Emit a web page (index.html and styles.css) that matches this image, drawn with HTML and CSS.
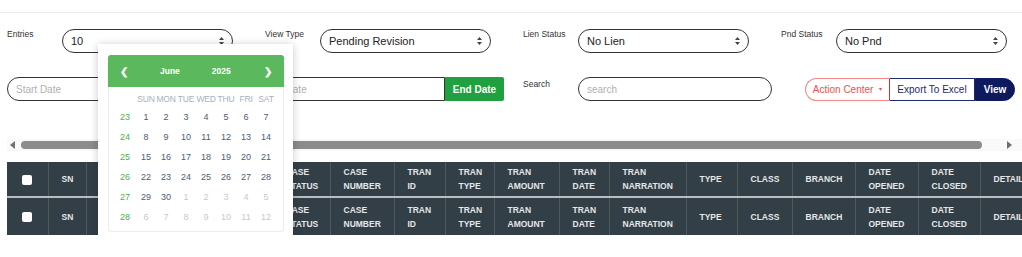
FILE: index.html
```html
<!DOCTYPE html>
<html lang="en">
<head>
  <meta charset="UTF-8" />
  <meta name="viewport" content="width=device-width, initial-scale=1.0"/>
  <title>Lien Report</title>
  <link rel="stylesheet" href="styles.css">
</head>
<body>

  <div class="topbar"></div>

  <div class="panel">
    <div class="filters">
      <div class="field">
        <label for="entries">Entries</label>
        <div class="select-wrap">
          <select id="entries"><option>10</option></select>
          <svg class="arrows" width="5" height="8" viewBox="0 0 5 8"><path d="M2.5 0 L5 3 L0 3 Z M2.5 8 L5 5 L0 5 Z" fill="#444"/></svg>
        </div>
      </div>
      <div class="field">
        <label for="viewType">View Type</label>
        <div class="select-wrap">
          <select id="viewType"><option>Pending Revision</option></select>
          <svg class="arrows" width="5" height="8" viewBox="0 0 5 8"><path d="M2.5 0 L5 3 L0 3 Z M2.5 8 L5 5 L0 5 Z" fill="#444"/></svg>
        </div>
      </div>
      <div class="field">
        <label for="lien">Lien Status</label>
        <div class="select-wrap">
          <select id="lien"><option>No Lien</option></select>
          <svg class="arrows" width="5" height="8" viewBox="0 0 5 8"><path d="M2.5 0 L5 3 L0 3 Z M2.5 8 L5 5 L0 5 Z" fill="#444"/></svg>
        </div>
      </div>
      <div class="field">
        <label for="pnd">Pnd Status</label>
        <div class="select-wrap">
          <select id="pnd"><option>No Pnd</option></select>
          <svg class="arrows" width="5" height="8" viewBox="0 0 5 8"><path d="M2.5 0 L5 3 L0 3 Z M2.5 8 L5 5 L0 5 Z" fill="#444"/></svg>
        </div>
      </div>
    </div>

    <div class="filters-2">
      <div class="date-range">
        <input type="text" class="start-date" placeholder="Start Date">
        <input type="text" class="end-date" placeholder="End Date">
        <button class="btn-end">End Date</button>
      </div>
      <div class="field search-field">
        <label for="search">Search</label>
        <input type="text" id="search" class="search" placeholder="search">
      </div>
      <div class="actions">
        <button class="btn-action">Action Center <span class="caret">&#9662;</span></button>
        <button class="btn-export">Export To Excel</button>
        <button class="btn-view">View</button>
      </div>
    </div>

    <div class="datepicker">
      <div class="dp-inner">
        <div class="dp-head">
          <span class="dp-nav">&#10094;</span>
          <span class="dp-month">June</span>
          <span class="dp-year">2025</span>
          <span class="dp-nav">&#10095;</span>
        </div>
        <div class="dp-grid">
          <span></span><span class="dn">SUN</span><span class="dn">MON</span><span class="dn">TUE</span><span class="dn">WED</span><span class="dn">THU</span><span class="dn">FRI</span><span class="dn">SAT</span>

          <span class="wk">23</span><span>1</span><span>2</span><span>3</span><span>4</span><span>5</span><span>6</span><span>7</span>
          <span class="wk">24</span><span>8</span><span>9</span><span>10</span><span>11</span><span>12</span><span>13</span><span>14</span>
          <span class="wk">25</span><span>15</span><span>16</span><span>17</span><span>18</span><span>19</span><span>20</span><span>21</span>
          <span class="wk">26</span><span>22</span><span>23</span><span>24</span><span>25</span><span>26</span><span>27</span><span>28</span>
          <span class="wk">27</span><span>29</span><span>30</span><span class="off">1</span><span class="off">2</span><span class="off">3</span><span class="off">4</span><span class="off">5</span>
          <span class="wk">28</span><span class="off">6</span><span class="off">7</span><span class="off">8</span><span class="off">9</span><span class="off">10</span><span class="off">11</span><span class="off">12</span>
        </div>
      </div>
    </div>
  </div>

  <div class="scrollbar">
    <span class="sb-left"></span>
    <span class="sb-thumb"></span>
    <span class="sb-right"></span>
  </div>

  <div class="table-wrap">
    <table class="report">
      <colgroup>
        <col class="c-check"><col class="c-sn"><col class="c-accno"><col class="c-accname"><col class="c-status">
        <col class="c-caseno"><col class="c-tid"><col class="c-ttype"><col class="c-tamt"><col class="c-tdate">
        <col class="c-narr"><col class="c-type"><col class="c-class"><col class="c-branch"><col class="c-opened">
        <col class="c-closed"><col class="c-details"><col class="c-action">
      </colgroup>
      <thead>
        <tr>
          <th class="chk"><input type="checkbox"></th>
          <th>SN</th><th>ACCOUNT NUMBER</th><th>ACCOUNT NAME</th><th>CASE STATUS</th>
          <th>CASE NUMBER</th><th>TRAN ID</th><th>TRAN TYPE</th><th>TRAN AMOUNT</th><th>TRAN DATE</th>
          <th>TRAN NARRATION</th><th>TYPE</th><th>CLASS</th><th>BRANCH</th><th>DATE OPENED</th>
          <th>DATE CLOSED</th><th>DETAILS</th><th>ACTION</th>
        </tr>
      </thead>
      <tbody>
        <tr>
          <td class="chk"><input type="checkbox"></td>
          <td>SN</td><td>ACCOUNT NUMBER</td><td>ACCOUNT NAME</td><td>CASE STATUS</td>
          <td>CASE NUMBER</td><td>TRAN ID</td><td>TRAN TYPE</td><td>TRAN AMOUNT</td><td>TRAN DATE</td>
          <td>TRAN NARRATION</td><td>TYPE</td><td>CLASS</td><td>BRANCH</td><td>DATE OPENED</td>
          <td>DATE CLOSED</td><td>DETAILS</td><td>ACTION</td>
        </tr>
      </tbody>
    </table>
  </div>

</body>
</html>
```

FILE: styles.css
```css
* {
  box-sizing: border-box;
}

body {
  margin: 0;
  padding: 0;
  background-color: #ffffff;
  color: #333;
  font-family: "Liberation Sans", Arial, sans-serif;
  overflow: hidden;
}

.topbar {
  height: 13px;
  border-bottom: 1px solid #ececec;
}

.panel {
  position: relative;
  padding: 16px 7px 0;
}

.filters {
  display: grid;
  grid-template-columns: repeat(4, 226px);
  column-gap: 32px;
}

.field {
  display: flex;
  align-items: flex-start;
}

.field label {
  width: 55px;
  flex: none;
  font-size: 8.5px;
  color: #333;
  padding-top: 0;
}

.select-wrap {
  position: relative;
  flex: 1;
}

select {
  -webkit-appearance: none;
  appearance: none;
  width: 100%;
  height: 24px;
  border: 1px solid #333;
  border-radius: 12px;
  padding: 0 8px;
  font-family: inherit;
  font-size: 11px;
  color: #222;
  background: #fff;
}

.arrows {
  position: absolute;
  right: 9px;
  top: 8px;
}

.filters-2 {
  display: flex;
  align-items: flex-start;
  margin-top: 24px;
}

.date-range {
  display: flex;
  width: 497px;
  margin-right: 19px;
}

input[type="text"] {
  height: 24px;
  border: 1px solid #333;
  font-family: inherit;
  font-size: 10px;
  color: #333;
  padding: 0 8px;
  outline: none;
}

input::placeholder {
  color: #b0b0b0;
}

.start-date {
  width: 249px;
  border-radius: 12px;
}

.end-date {
  width: 189px;
  border-radius: 12px 0 0 12px;
}

.btn-end {
  height: 24px;
  width: 59px;
  border: none;
  border-radius: 0 2px 2px 0;
  background-color: #20a03e;
  color: #fff;
  font-family: inherit;
  font-size: 10px;
  font-weight: bold;
  padding: 0;
}

.search-field label {
  padding-top: 2px;
}

.search {
  width: 194px;
  border-radius: 12px;
}

.actions {
  display: flex;
  margin-left: auto;
  margin-top: 1px;
}

.actions button {
  height: 23px;
  font-family: inherit;
  font-size: 10px;
  padding: 0;
  cursor: pointer;
}

.btn-action {
  width: 85px;
  border: 1px solid #f48a8a;
  border-right: 1px solid #c0392b;
  border-radius: 12px 0 0 12px;
  background: #fff;
  color: #ef4f4f;
}

.caret {
  font-size: 6px;
  margin-left: 3px;
  vertical-align: 2px;
}

.btn-export {
  width: 85px;
  border: 1px solid #1c2a6e;
  border-left: none;
  background: #fff;
  color: #1c2a6e;
}

.btn-view {
  width: 40px;
  border: 1px solid #0e1a5e;
  border-radius: 0 12px 12px 0;
  background: #0e1a5e;
  color: #fff;
  font-weight: bold;
}

/* datepicker dropdown */
.datepicker {
  position: absolute;
  left: 98px;
  top: 31px;
  width: 195px;
  height: 199px;
  background: #fff;
  box-shadow: 0 1px 8px rgba(0, 0, 0, 0.22);
  padding: 11px 9px 0 10px;
  z-index: 10;
}

.dp-inner {
  border: 1px solid #ececec;
  border-radius: 3px;
  height: 177px;
}

.dp-head {
  display: flex;
  align-items: center;
  height: 32px;
  margin: -1px -1px 0;
  padding: 0 12px 0 12px;
  background-color: #5cb85c;
  border-radius: 3px 3px 0 0;
  color: #fff;
  font-size: 8.5px;
  font-weight: bold;
}

.dp-nav {
  font-size: 10px;
}

.dp-month {
  margin-left: 32px;
}

.dp-year {
  margin-left: 32px;
  margin-right: auto;
}

.dp-grid {
  display: grid;
  grid-template-columns: repeat(8, 20px);
  grid-template-rows: 17px repeat(6, 20px);
  justify-content: center;
  justify-items: center;
  align-items: center;
  margin-top: 3px;
  font-size: 9px;
  color: #4b5c72;
}

.dp-grid > span:nth-child(8n+1) {
  margin-right: 2px;
}

.dp-grid .dn {
  font-size: 8.5px;
  color: #a7b0c0;
  letter-spacing: -0.2px;
}

.dp-grid .wk {
  color: #47b347;
}

.dp-grid .off {
  color: #c8c8c8;
}

/* fake top scrollbar */
.scrollbar {
  display: flex;
  align-items: center;
  height: 12px;
  margin: 38px 0 0 7px;
  background: #f9f9f9;
}

.sb-left {
  width: 0;
  height: 0;
  margin: 0 6px 0 3px;
  border-top: 4px solid transparent;
  border-bottom: 4px solid transparent;
  border-right: 5px solid #707070;
}

.sb-thumb {
  width: 961px;
  height: 8px;
  border-radius: 4px;
  background-color: #8c8c8c;
}

.sb-right {
  width: 0;
  height: 0;
  margin-left: 25px;
  border-top: 4px solid transparent;
  border-bottom: 4px solid transparent;
  border-left: 5px solid #707070;
}

/* table */
.table-wrap {
  margin-top: 11px;
  padding-left: 7px;
  overflow: hidden;
}

.report {
  border-collapse: collapse;
  table-layout: fixed;
  width: 1113px;
}

.c-check { width: 41px; }
.c-sn { width: 38px; }
.c-accno { width: 86px; }
.c-accname { width: 100px; }
.c-status { width: 58px; }
.c-caseno { width: 64px; }
.c-tid { width: 51px; }
.c-ttype { width: 49px; }
.c-tamt { width: 65px; }
.c-tdate { width: 50px; }
.c-narr { width: 77px; }
.c-type { width: 51px; }
.c-class { width: 55px; }
.c-branch { width: 63px; }
.c-opened { width: 63px; }
.c-closed { width: 62px; }
.c-details { width: 70px; }
.c-action { width: 70px; }

.report th,
.report td {
  height: 35px;
  padding: 0 13px;
  background-color: #333f47;
  color: #e4e6e8;
  font-size: 8.5px;
  font-weight: bold;
  line-height: 14px;
  text-align: left;
  border-right: 1px solid #4e5960;
  white-space: normal;
  overflow: hidden;
}

.report tbody td {
  border-top: 2px solid #b9bdc0;
  height: 38px;
}

.report .chk {
  padding: 0;
  text-align: center;
}

.chk input {
  -webkit-appearance: none;
  appearance: none;
  width: 10px;
  height: 10px;
  margin: 0;
  background: #fff;
  border-radius: 2px;
  vertical-align: middle;
}
```
